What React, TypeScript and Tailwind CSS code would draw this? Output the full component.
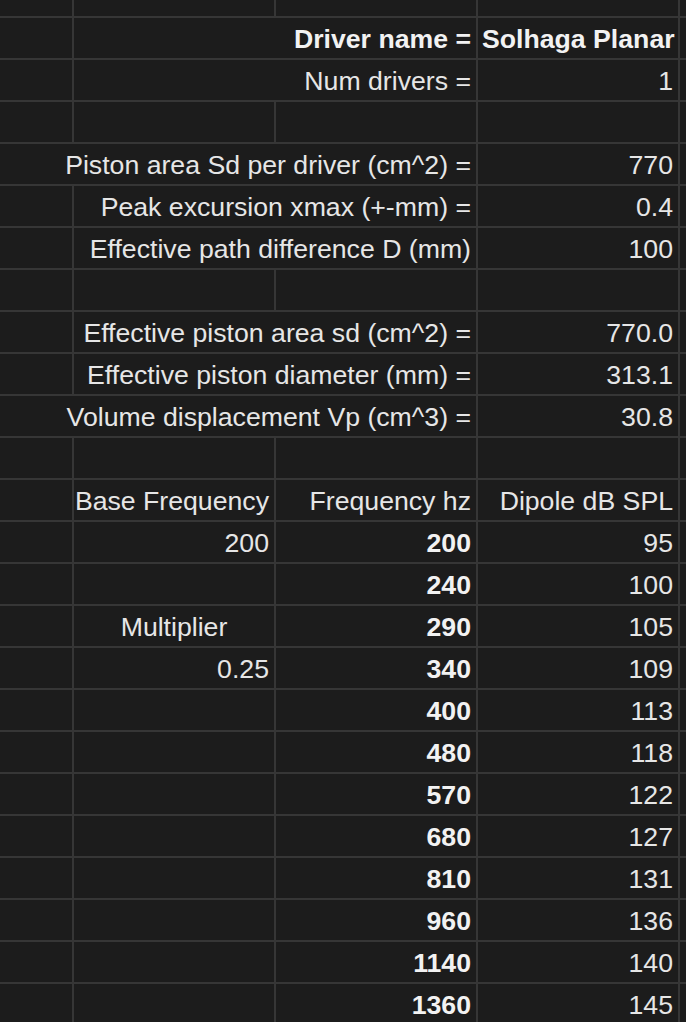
import React from 'react';

type Cell = {
    text?: string;
    span?: number;
    bold?: boolean;
    align?: 'left' | 'right' | 'center';
};

// each row lists its cells from column A to column E (span counts merged columns)
const rows: Cell[][] = [
    [{}, {}, {}, {}, {}],
    [{}, { text: 'Driver name =', span: 2, bold: true }, { text: 'Solhaga Planar', bold: true, align: 'left' }, {}],
    [{}, { text: 'Num drivers =', span: 2 }, { text: '1' }, {}],
    [{}, {}, {}, {}, {}],
    [{ text: 'Piston area Sd per driver (cm^2) =', span: 3 }, { text: '770' }, {}],
    [{}, { text: 'Peak excursion xmax (+-mm) =', span: 2 }, { text: '0.4' }, {}],
    [{}, { text: 'Effective path difference D (mm)', span: 2 }, { text: '100' }, {}],
    [{}, {}, {}, {}, {}],
    [{}, { text: 'Effective piston area sd (cm^2) =', span: 2 }, { text: '770.0' }, {}],
    [{}, { text: 'Effective piston diameter (mm) =', span: 2 }, { text: '313.1' }, {}],
    [{ text: 'Volume displacement Vp (cm^3) =', span: 3 }, { text: '30.8' }, {}],
    [{}, {}, {}, {}, {}],
    [{}, { text: 'Base Frequency' }, { text: 'Frequency hz' }, { text: 'Dipole dB SPL' }, {}],
];

const freqs: [string, string, string][] = [
    ['200', '200', '95'],
    ['', '240', '100'],
    ['Multiplier', '290', '105'],
    ['0.25', '340', '109'],
    ['', '400', '113'],
    ['', '480', '118'],
    ['', '570', '122'],
    ['', '680', '127'],
    ['', '810', '131'],
    ['', '960', '136'],
    ['', '1140', '140'],
    ['', '1360', '145'],
];

freqs.forEach(([b, c, d]) => {
    rows.push([
        {},
        { text: b, align: b === 'Multiplier' ? 'center' : 'right' },
        { text: c, bold: true },
        { text: d },
        {},
    ]);
});

function SheetCell({ cell }: { cell: Cell }) {
    const span = cell.span === 3 ? 'col-span-3' : cell.span === 2 ? 'col-span-2' : '';
    const justify =
        cell.align === 'left' ? 'justify-start pl-[4px]' : cell.align === 'center' ? 'justify-center' : 'justify-end pr-[5px]';
    return (
        <div className={`flex items-end pb-[4px] bg-[#1c1c1c] whitespace-nowrap overflow-visible ${span} ${justify}`}>
            {cell.text && (
                <span className={`leading-[30px] ${cell.bold ? 'font-bold text-[#f2f2f2]' : 'text-[#e6e6e6]'}`}>
                    {cell.text}
                </span>
            )}
        </div>
    );
}

export default function App() {
    return (
        <div className="w-[686px] h-[1022px] overflow-hidden bg-[#1c1c1c]">
            <div
                className="grid grid-cols-[72px_200px_200px_200px_1fr] grid-rows-[16px] auto-rows-[40px] gap-[2px] bg-[#363636] text-[26.67px]"
                style={{ fontFamily: '"Liberation Sans", Arial, sans-serif' }}
            >
                {rows.map((row, r) =>
                    row.map((cell, c) => <SheetCell key={`${r}-${c}`} cell={cell} />)
                )}
            </div>
        </div>
    );
}
